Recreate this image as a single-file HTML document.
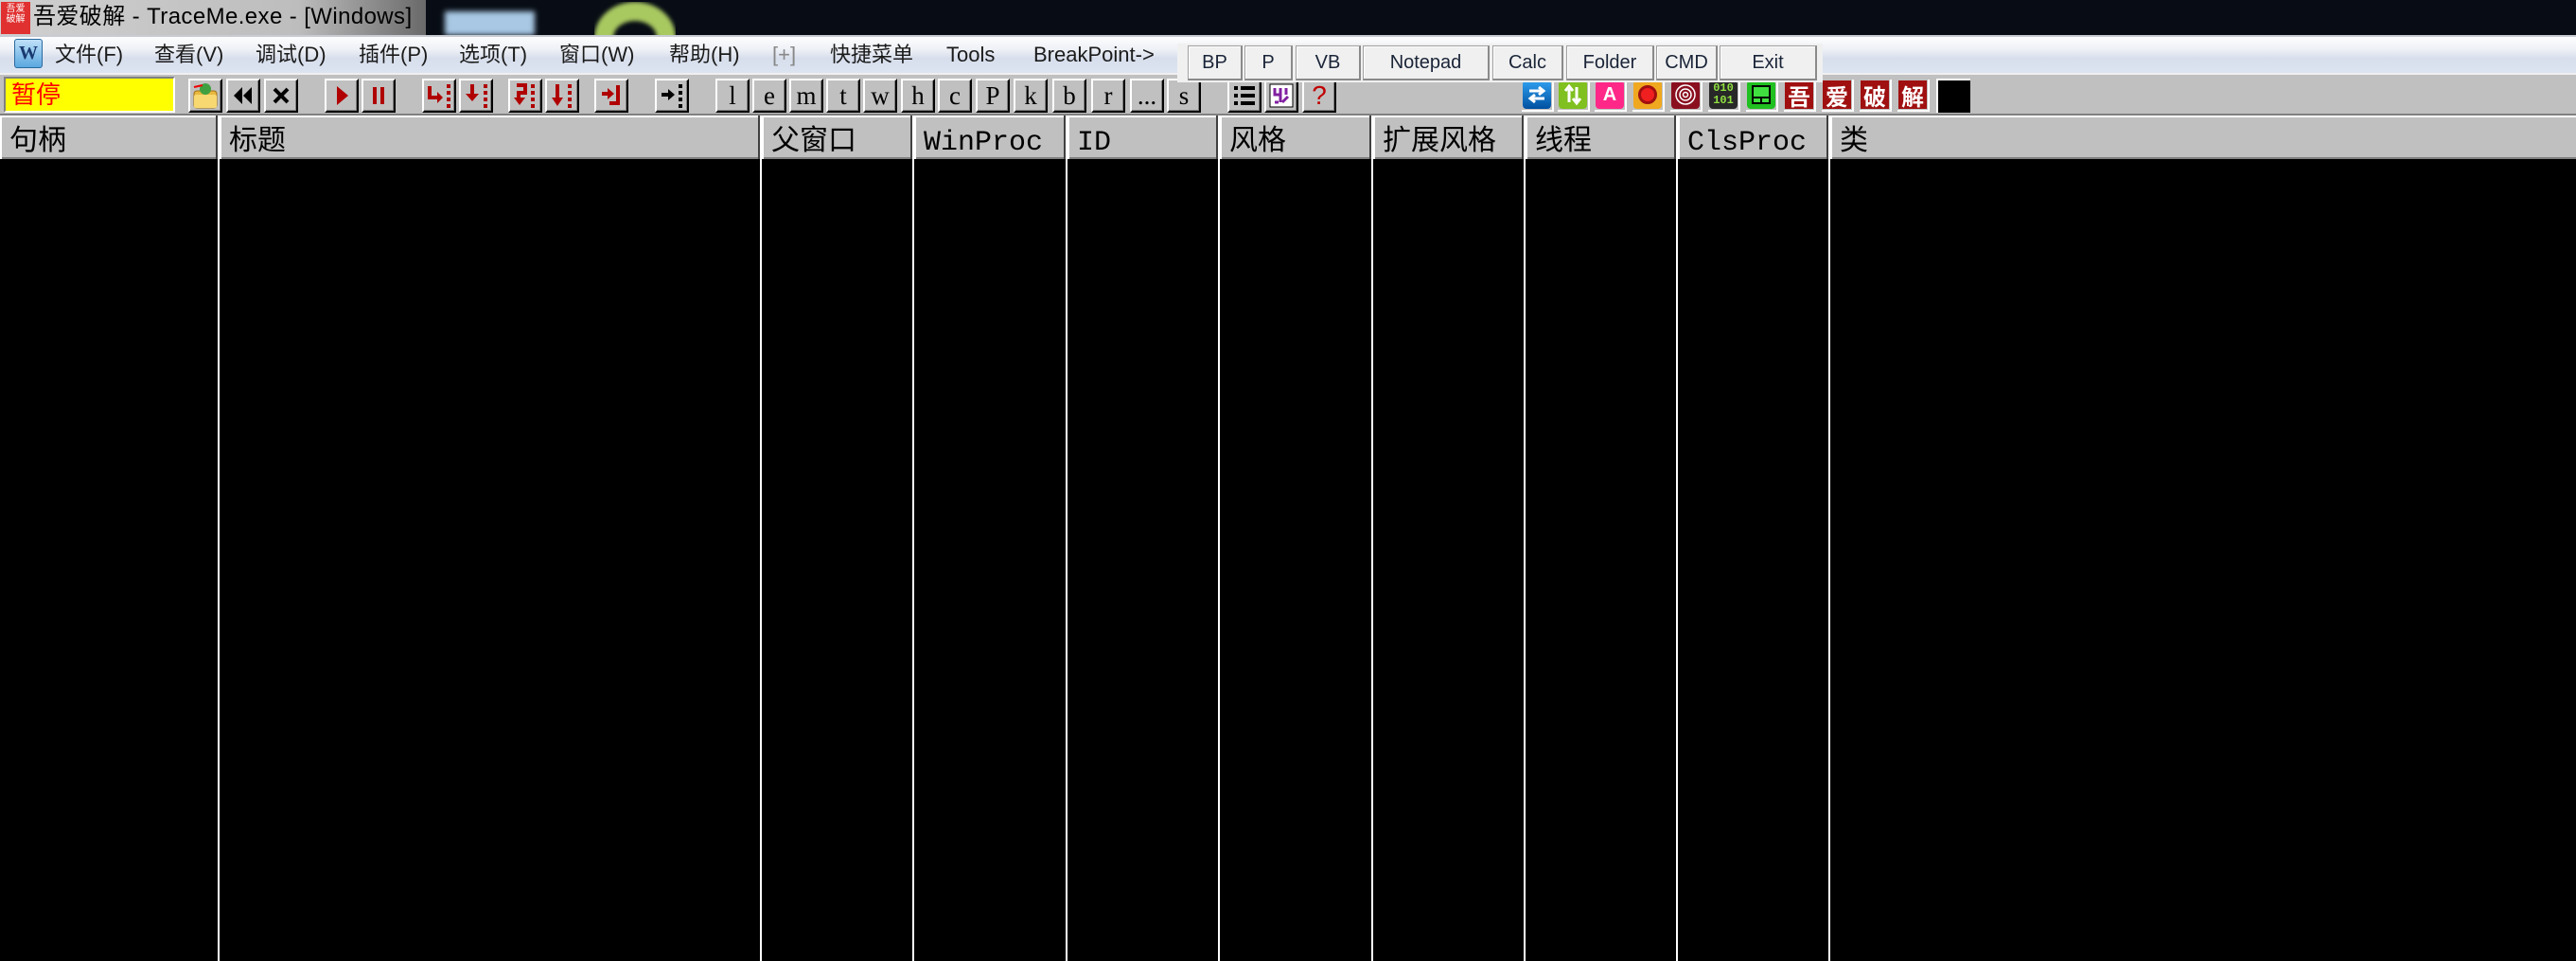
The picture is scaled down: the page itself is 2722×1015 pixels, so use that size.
<!DOCTYPE html>
<html><head><meta charset="utf-8">
<style>
*{margin:0;padding:0;box-sizing:border-box}
html,body{width:2722px;height:1015px;overflow:hidden;background:#000;position:relative;font-family:"Liberation Sans","Noto Sans CJK SC",sans-serif}
.a{position:absolute}
.title{left:0;top:0;width:2722px;height:37px;background:#080d15}
.menu{left:0;top:37px;width:2722px;height:40px;background:linear-gradient(#fdfdfe 0%,#eef1f6 35%,#d7deec 60%,#dde4f1 100%);border-top:2px solid #c8ccd2}
.mi{position:absolute;top:41px;font-size:22px;color:#1b1b1b;line-height:34px}
.tb{left:0;top:77px;width:2722px;height:45px;background:#c0c0c0;border-top:2px solid #f0f0f0;border-bottom:2px solid #808080}
.btn{position:absolute;top:83px;height:36px;width:36px;background:#c0c0c0;border-top:2px solid #fff;border-left:2px solid #fff;border-right:2px solid #000;border-bottom:2px solid #000;box-shadow:inset -1px -1px 0 #808080;display:flex;align-items:center;justify-content:center}
.lt{font-family:"Liberation Serif",serif;font-size:27px;color:#000;line-height:1}
.ic{position:absolute;top:84px;width:34px;height:34px;border-right:2px solid #fff;border-bottom:2px solid #fff;display:flex;align-items:center;justify-content:center}
.in{width:30px;height:30px;border-radius:4px;display:flex;align-items:center;justify-content:center;color:#fff;font-weight:bold;font-size:20px}
.hd{left:0;top:122px;width:2722px;height:46px;background:#c0c0c0;border-top:2px solid #fff;border-bottom:2px solid #808080}
.hc{position:absolute;top:122px;height:46px;font-family:"Liberation Mono","Noto Sans CJK SC",monospace;font-size:30px;line-height:46px;padding-top:6px;color:#000;padding-left:8px;border-left:2px solid #fff}
.vl{position:absolute;top:122px;width:2px;height:893px;background:#fff}
.vd{position:absolute;top:122px;width:2px;height:46px;background:#404040}
.pb{position:absolute;top:48px;height:37px;background:#f0f0f0;border:1px solid #a0a0a0;border-right:2px solid #8a8a8a;border-bottom:2px solid #8a8a8a;box-shadow:inset 1px 1px 0 #fff;font-size:20px;color:#1a2438;text-align:center;line-height:34px}
</style></head><body>
<div class="a title"></div>
<div class="a" style="left:0;top:0;width:450px;height:37px;background:linear-gradient(90deg,#d0d0d0,#bdbdbd 70%,#6a6a6a)"></div>
<div class="a" style="left:470px;top:12px;width:95px;height:25px;background:#a8c8e4;filter:blur(3px)"></div>
<div class="a" style="left:628px;top:2px;width:86px;height:76px;border:20px solid #a8c860;border-radius:50%;filter:blur(2px);clip-path:inset(0 0 39px 0)"></div>
<div class="a" style="left:1px;top:2px;width:31px;height:34px;background:#e03030;color:#fff;font-size:10px;line-height:11px;text-align:center;font-family:'Noto Sans CJK SC'">吾爱<br>破解</div>
<div class="a" style="left:35px;top:1px;font-size:24px;line-height:34px;color:#000;letter-spacing:0.4px">吾爱破解 - TraceMe.exe - [Windows]</div>

<div class="a menu"></div>
<div class="a" style="left:15px;top:41px;width:30px;height:31px;background:linear-gradient(#bfe0f8,#5aa8e0);border:1px solid #2a6aa0;border-radius:3px;color:#1a3a70;font-family:'Liberation Serif';font-size:20px;font-weight:bold;text-align:center;line-height:29px">W</div>
<div class="mi" style="left:58px">文件(F)</div>
<div class="mi" style="left:163px">查看(V)</div>
<div class="mi" style="left:270px">调试(D)</div>
<div class="mi" style="left:379px">插件(P)</div>
<div class="mi" style="left:485px">选项(T)</div>
<div class="mi" style="left:591px">窗口(W)</div>
<div class="mi" style="left:707px">帮助(H)</div>
<div class="mi" style="left:816px;color:#888">[+]</div>
<div class="mi" style="left:877px">快捷菜单</div>
<div class="mi" style="left:1000px">Tools</div>
<div class="mi" style="left:1092px">BreakPoint-&gt;</div>

<div class="a tb"></div>
<div class="a" style="left:4px;top:81px;width:181px;height:38px;background:#ff0;border:2px solid #808080;border-right-color:#fff;border-bottom-color:#fff;color:#f00;font-size:26px;line-height:32px;padding-left:6px;font-family:'Noto Sans CJK SC'">暂停</div>

<div class="btn" style="left:199px"><svg width="30" height="30"><rect x="3" y="10" width="24" height="18" rx="3" fill="#e8b840" stroke="#a07010"/><rect x="3" y="14" width="24" height="14" rx="2" fill="#f8d870"/><circle cx="15" cy="8" r="6" fill="#40a040"/><path d="M3 6 L12 4" stroke="#e00" stroke-width="2"/></svg></div>
<div class="btn" style="left:239px"><svg width="26" height="26"><path d="M12 4 L3 13 L12 22Z M22 4 L13 13 L22 22Z" fill="#000"/></svg></div>
<div class="btn" style="left:279px"><svg width="26" height="26"><path d="M6 6 L20 20 M20 6 L6 20" stroke="#000" stroke-width="4"/></svg></div>
<div class="btn" style="left:343px"><svg width="26" height="26"><path d="M8 3 L20 13 L8 23Z" fill="#b00000"/></svg></div>
<div class="btn" style="left:382px"><svg width="26" height="26"><rect x="7" y="4" width="4" height="18" fill="#b00000"/><rect x="15" y="4" width="4" height="18" fill="#b00000"/></svg></div>
<div class="btn" style="left:446px"><svg width="28" height="28"><path d="M4 4 V16 H14" stroke="#b00000" stroke-width="4" fill="none"/><path d="M12 10 L18 16 L12 22Z" fill="#b00000"/><g fill="#b00000"><rect x="22" y="2" width="4" height="4"/><rect x="22" y="9" width="4" height="4"/><rect x="22" y="16" width="4" height="4"/><rect x="22" y="23" width="4" height="4"/></g></svg></div>
<div class="btn" style="left:485px"><svg width="28" height="28"><path d="M10 2 V14" stroke="#b00000" stroke-width="4"/><path d="M3 12 L10 20 L17 12Z" fill="#b00000"/><g fill="#b00000"><rect x="22" y="2" width="4" height="4"/><rect x="22" y="9" width="4" height="4"/><rect x="22" y="16" width="4" height="4"/><rect x="22" y="23" width="4" height="4"/></g></svg></div>
<div class="btn" style="left:537px"><svg width="28" height="28"><path d="M5 3 H14 V11 H7 V17" stroke="#b00000" stroke-width="4" fill="none"/><path d="M2 16 L8 24 L14 16Z" fill="#b00000"/><g fill="#b00000"><rect x="20" y="2" width="4" height="4"/><rect x="20" y="9" width="4" height="4"/><rect x="20" y="16" width="4" height="4"/><rect x="20" y="23" width="4" height="4"/></g></svg></div>
<div class="btn" style="left:576px"><svg width="28" height="28"><path d="M9 2 V18" stroke="#b00000" stroke-width="4"/><path d="M3 16 L9 25 L15 16Z" fill="#b00000"/><g fill="#b00000"><rect x="20" y="2" width="4" height="4"/><rect x="20" y="9" width="4" height="4"/><rect x="20" y="16" width="4" height="4"/><rect x="20" y="23" width="4" height="4"/></g></svg></div>
<div class="btn" style="left:628px"><svg width="28" height="28"><path d="M4 12 H12" stroke="#b00000" stroke-width="4"/><path d="M10 6 L17 12 L10 18Z" fill="#b00000"/><path d="M21 3 V22 H12" stroke="#b00000" stroke-width="4" fill="none"/></svg></div>
<div class="btn" style="left:692px"><svg width="28" height="28"><path d="M3 13 H12" stroke="#000" stroke-width="4"/><path d="M10 7 L17 13 L10 19Z" fill="#000"/><g fill="#000"><rect x="21" y="2" width="4" height="4"/><rect x="21" y="9" width="4" height="4"/><rect x="21" y="16" width="4" height="4"/><rect x="21" y="23" width="4" height="4"/></g></svg></div>

<div class="btn" style="left:756px"><span class="lt">l</span></div>
<div class="btn" style="left:795px"><span class="lt">e</span></div>
<div class="btn" style="left:834px"><span class="lt">m</span></div>
<div class="btn" style="left:873px"><span class="lt">t</span></div>
<div class="btn" style="left:912px"><span class="lt">w</span></div>
<div class="btn" style="left:952px"><span class="lt">h</span></div>
<div class="btn" style="left:991px"><span class="lt">c</span></div>
<div class="btn" style="left:1031px"><span class="lt">P</span></div>
<div class="btn" style="left:1071px"><span class="lt">k</span></div>
<div class="btn" style="left:1112px"><span class="lt">b</span></div>
<div class="btn" style="left:1153px"><span class="lt">r</span></div>
<div class="btn" style="left:1194px"><span class="lt">...</span></div>
<div class="btn" style="left:1233px"><span class="lt">s</span></div>
<div class="btn" style="left:1297px"><svg width="26" height="26"><g fill="#000"><rect x="2" y="3" width="4" height="4"/><rect x="9" y="3" width="15" height="4"/><rect x="2" y="11" width="4" height="4"/><rect x="9" y="11" width="15" height="4"/><rect x="2" y="19" width="4" height="4"/><rect x="9" y="19" width="15" height="4"/></g></svg></div>
<div class="btn" style="left:1336px"><svg width="26" height="26"><rect x="1" y="1" width="24" height="24" fill="#fff" stroke="#000"/><path d="M6 5 V12 H12 M12 5 V20 M18 5 V12 M14 20 L20 14 M6 20 H10" stroke="#8020a0" stroke-width="3" fill="none"/></svg></div>
<div class="btn" style="left:1376px"><span style="color:#c00000;font-size:28px;font-family:'Liberation Sans'">?</span></div>

<div class="ic" style="left:1608px"><div class="in" style="background:linear-gradient(#30a0f0,#0050a0)"><svg width="24" height="24"><path d="M4 8 H18 M14 4 L19 8 L14 12 M20 16 H6 M10 12 L5 16 L10 20" stroke="#fff" stroke-width="3" fill="none"/></svg></div></div>
<div class="ic" style="left:1646px"><div class="in" style="background:#80c020"><svg width="24" height="24"><path d="M8 4 V20 M4 8 L8 3 L12 8 M16 20 V4 M12 16 L16 21 L20 16" stroke="#fff" stroke-width="3" fill="none"/></svg></div></div>
<div class="ic" style="left:1685px"><div class="in" style="background:#ff2888">A</div></div>
<div class="ic" style="left:1725px"><div class="in" style="background:#f0a820"><div style="width:20px;height:20px;border-radius:50%;background:#f02020;border:3px solid #a01010"></div></div></div>
<div class="ic" style="left:1765px"><div class="in" style="background:#8a1020"><svg width="26" height="26"><circle cx="13" cy="13" r="10" stroke="#fff" fill="none" stroke-width="1.5"/><circle cx="13" cy="13" r="6" stroke="#fff" fill="none" stroke-width="1.5"/><circle cx="13" cy="13" r="2.5" stroke="#fff" fill="none" stroke-width="1.5"/></svg></div></div>
<div class="ic" style="left:1805px"><div class="in" style="background:#282828;color:#90e040;font-size:12px;line-height:13px;font-family:'Liberation Mono';text-align:center">010<br>101</div></div>
<div class="ic" style="left:1845px"><div class="in" style="background:#20c020"><svg width="24" height="24"><rect x="3" y="3" width="18" height="18" stroke="#000" fill="#40e040" stroke-width="2"/><path d="M3 15 H21 M12 15 V21" stroke="#000" stroke-width="2"/></svg></div></div>
<div class="ic" style="left:1885px"><div class="in" style="background:#a01010;border-radius:0;font-family:'Noto Sans CJK SC';font-size:24px">吾</div></div>
<div class="ic" style="left:1925px"><div class="in" style="background:#a01010;border-radius:0;font-family:'Noto Sans CJK SC';font-size:24px">爱</div></div>
<div class="ic" style="left:1965px"><div class="in" style="background:#a01010;border-radius:0;font-family:'Noto Sans CJK SC';font-size:24px">破</div></div>
<div class="ic" style="left:2005px"><div class="in" style="background:#a01010;border-radius:0;font-family:'Noto Sans CJK SC';font-size:24px">解</div></div>
<div class="a" style="left:2046px;top:83px;width:36px;height:36px;background:#000;border-top:2px solid #fff;border-left:2px solid #fff"></div>

<div class="a" style="left:1244px;top:46px;width:682px;height:41px;background:#f0f0f0"></div>
<div class="pb" style="left:1255px;width:58px">BP</div>
<div class="pb" style="left:1315px;width:51px">P</div>
<div class="pb" style="left:1369px;width:69px">VB</div>
<div class="pb" style="left:1440px;width:134px">Notepad</div>
<div class="pb" style="left:1577px;width:75px">Calc</div>
<div class="pb" style="left:1655px;width:93px">Folder</div>
<div class="pb" style="left:1750px;width:65px">CMD</div>
<div class="pb" style="left:1817px;width:103px">Exit</div>

<div class="a hd"></div>
<div class="vl" style="left:230px"></div>
<div class="vl" style="left:803px"></div>
<div class="vl" style="left:964px"></div>
<div class="vl" style="left:1126px"></div>
<div class="vl" style="left:1287px"></div>
<div class="vl" style="left:1449px"></div>
<div class="vl" style="left:1610px"></div>
<div class="vl" style="left:1771px"></div>
<div class="vl" style="left:1932px"></div>
<div class="hc" style="left:0">句柄</div>
<div class="hc" style="left:232px">标题</div>
<div class="hc" style="left:805px">父窗口</div>
<div class="hc" style="left:966px">WinProc</div>
<div class="hc" style="left:1128px">ID</div>
<div class="hc" style="left:1289px">风格</div>
<div class="hc" style="left:1451px">扩展风格</div>
<div class="hc" style="left:1612px">线程</div>
<div class="hc" style="left:1773px">ClsProc</div>
<div class="hc" style="left:1934px">类</div>
<div class="vd" style="left:228px"></div>
<div class="vd" style="left:801px"></div>
<div class="vd" style="left:962px"></div>
<div class="vd" style="left:1124px"></div>
<div class="vd" style="left:1285px"></div>
<div class="vd" style="left:1447px"></div>
<div class="vd" style="left:1608px"></div>
<div class="vd" style="left:1769px"></div>
<div class="vd" style="left:1930px"></div>
</body></html>
